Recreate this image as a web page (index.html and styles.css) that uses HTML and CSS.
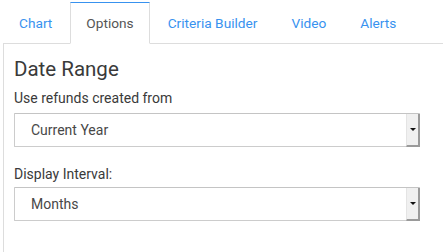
FILE: index.html
```html
<!DOCTYPE html>
<html lang="en">

<head>
	<meta charset="UTF-8">
	<meta name="viewport" content="width=device-width, initial-scale=1.0">
	<title>Report Options</title>
	<link rel="stylesheet" href="styles.css">
</head>

<body>
	<div class="report">
		<ul class="tabs">
			<li><a href="#">Chart</a></li>
			<li class="active"><a href="#">Options</a></li>
			<li><a href="#">Criteria Builder</a></li>
			<li><a href="#">Video</a></li>
			<li><a href="#">Alerts</a></li>
		</ul>
		<div class="panel">
			<h3>Date Range</h3>
			<label class="first" for="range">Use refunds created from</label>
			<div class="select">
				<select id="range">
					<option>Current Year</option>
				</select>
				<span class="arrow"></span>
			</div>
			<label class="second" for="interval">Display Interval:</label>
			<div class="select">
				<select id="interval">
					<option>Months</option>
				</select>
				<span class="arrow"></span>
			</div>
		</div>
	</div>
</body>

</html>
```

FILE: styles.css
```css
* {
	margin: 0;
	padding: 0;
	box-sizing: border-box;
}

body {
	font-family: Roboto, "Liberation Sans", sans-serif;
	font-size: 14px;
	color: #333;
	background-color: #fff;
}

.report {
	padding: 2px 0 0 3px;
	width: 443px;
}

.tabs {
	display: flex;
	list-style: none;
	border-bottom: 1px solid #ddd;
}

.tabs li {
	margin-bottom: -1px;
}

.tabs a {
	display: block;
	margin-right: 2px;
	padding: 10px 15px;
	font-size: 13.7px;
	line-height: 20px;
	border: 1px solid transparent;
	color: #3892ef;
	text-decoration: none;
}

.tabs .active a {
	color: #555;
	background-color: #fff;
	border-color: #ddd;
	border-top-color: #3892ef;
	border-bottom-color: #fff;
}

.panel {
	height: 210px;
	border-left: 1px solid #ddd;
	padding: 14px 0 0 10px;
}

h3 {
	font-size: 20.5px;
	font-weight: 400;
	line-height: 22px;
	color: #3a3a3a;
	margin-bottom: 8px;
}

label {
	display: block;
	line-height: 20px;
	color: #3a3a3a;
}

label.first {
	margin-bottom: 5px;
}

label.second {
	margin-top: 17px;
	margin-bottom: 3px;
}

.select {
	position: relative;
	width: 406px;
	height: 34px;
}

.select select {
	-webkit-appearance: none;
	appearance: none;
	width: 100%;
	height: 34px;
	padding: 0 16px;
	border: 1px solid #ccc;
	border-top-color: #c4c4c4;
	border-radius: 1px;
	background-color: #fff;
	font-family: Roboto, "Liberation Sans", sans-serif;
	font-size: 14px;
	color: #484848;
	outline: none;
}

.arrow {
	position: absolute;
	top: 1px;
	right: 0;
	bottom: 0;
	width: 14px;
	background-color: #f0f0f0;
	border-left: 1px solid #e4e4e4;
	border-right: 2px solid #9a9a9a;
	border-bottom: 2px solid #9a9a9a;
}

.arrow::after {
	content: "";
	position: absolute;
	left: 3px;
	top: 14px;
	border-left: 3px solid transparent;
	border-right: 3px solid transparent;
	border-top: 3px solid #111;
}
```
